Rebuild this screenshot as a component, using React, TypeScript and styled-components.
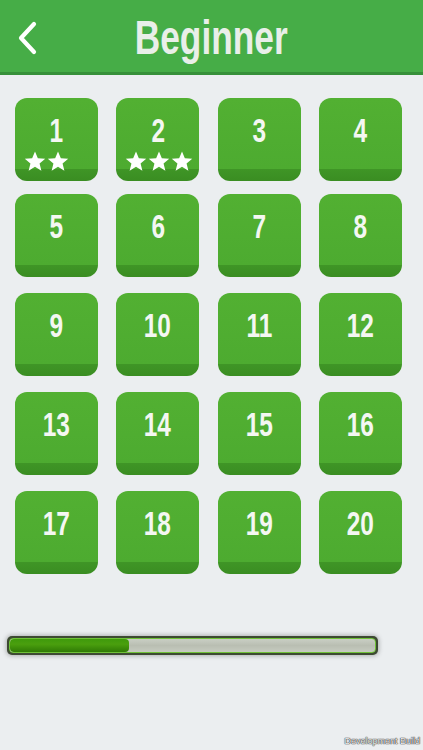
import React from "react";
import styled, { createGlobalStyle } from "styled-components";

const GlobalStyle = createGlobalStyle`
  html, body {
    margin: 0;
    padding: 0;
    background: #ebeef0;
  }
  body {
    font-family: "Liberation Sans Narrow", "Liberation Sans", sans-serif;
  }
`;

const Screen = styled.div`
  width: 423px;
  height: 750px;
  background: #ebeef0;
  display: flex;
  flex-direction: column;
  position: relative;
  overflow: hidden;
`;

const Header = styled.header`
  height: 72px;
  background: #46ad47;
  border-bottom: 3px solid #37903a;
  display: flex;
  align-items: center;
  justify-content: center;
  position: relative;
`;

const BackButton = styled.button`
  position: absolute;
  left: 13px;
  top: 19px;
  width: 28px;
  height: 38px;
  padding: 0;
  border: none;
  background: none;
  display: flex;
  align-items: center;
  justify-content: center;
`;

const Title = styled.h1`
  margin: 0;
  padding-top: 1px;
  font-family: "Liberation Sans Narrow", "Liberation Sans", sans-serif;
  font-weight: 700;
  font-size: 49px;
  color: #e9efe9;
  transform: scaleX(0.72);
`;

// first row sits a little tighter against the second one
const Grid = styled.div`
  display: grid;
  grid-template-columns: repeat(4, 83px);
  grid-template-rows: 80px repeat(4, 83px);
  justify-content: space-between;
  row-gap: 16px;
  padding: 23px 21px 0 15px;
`;

const Tile = styled.button`
  height: 83px;
  padding: 0;
  border: none;
  border-radius: 12px;
  background: linear-gradient(180deg, #52b032 0%, #4dab30 86%, #3f9526 86%, #3a8d22 100%);
  position: relative;
  display: flex;
  flex-direction: column;
  align-items: center;
  cursor: pointer;
`;

const Number = styled.span`
  margin-top: 16px;
  font-family: "Liberation Sans Narrow", "Liberation Sans", sans-serif;
  font-weight: 700;
  font-size: 33px;
  line-height: 34px;
  color: #f4f7f2;
  transform: scaleX(0.74);
`;

const Stars = styled.div`
  position: absolute;
  left: 9px;
  top: 53px;
  display: flex;
  gap: 1px;
`;

const Progress = styled.div`
  position: absolute;
  left: 7px;
  top: 636px;
  width: 371px;
  height: 19px;
  box-sizing: border-box;
  border-radius: 5px;
  background: #3d4a33;
  padding: 2px;
  box-shadow: 0 0 4px 1px rgba(60, 60, 60, 0.35);
`;

const Track = styled.div`
  height: 100%;
  box-sizing: border-box;
  border-radius: 4px;
  border: 1px solid #6fc237;
  background: linear-gradient(180deg, #c9cec4 0%, #b9beb2 50%, #c6cbc0 100%);
  overflow: hidden;
`;

const Fill = styled.div`
  height: 100%;
  border-radius: 4px;
  background: linear-gradient(180deg, #3f9a0c 0%, #4a9f0e 40%, #2f7a05 100%);
`;

const BuildLabel = styled.span`
  position: absolute;
  right: 3px;
  bottom: 4px;
  font-family: "Liberation Sans", sans-serif;
  font-size: 9px;
  color: #f2f2f2;
  text-shadow: 0 0 1px #333, 0 0 1px #333, 0 0 1px #333;
`;

const Star = () => (
  <svg width="22" height="21" viewBox="0 0 24 23">
    <polygon
      points="12,0.5 15.1,8 23.2,8.5 17,13.7 19,21.6 12,17.2 5,21.6 7,13.7 0.8,8.5 8.9,8"
      fill="#ffffff"
    />
  </svg>
);

const levels = Array.from({ length: 20 }, (_, i) => ({
  id: i + 1,
  stars: i === 0 ? 2 : i === 1 ? 3 : 0,
}));

export default function App() {
  const progress = 32.5;

  return (
    <Screen>
      <GlobalStyle />
      <Header>
        <BackButton aria-label="Back">
          <svg width="24" height="34" viewBox="0 0 24 34">
            <polyline
              points="19,3 6,17 19,31"
              fill="none"
              stroke="#ffffff"
              strokeWidth="4.2"
              strokeLinecap="round"
              strokeLinejoin="round"
            />
          </svg>
        </BackButton>
        <Title>Beginner</Title>
      </Header>

      <Grid>
        {levels.map((level) => (
          <Tile key={level.id}>
            <Number>{level.id}</Number>
            {level.stars > 0 && (
              <Stars>
                {Array.from({ length: level.stars }, (_, i) => (
                  <Star key={i} />
                ))}
              </Stars>
            )}
          </Tile>
        ))}
      </Grid>

      <Progress>
        <Track>
          <Fill style={{ width: `${progress}%` }} />
        </Track>
      </Progress>

      <BuildLabel>Development Build</BuildLabel>
    </Screen>
  );
}
